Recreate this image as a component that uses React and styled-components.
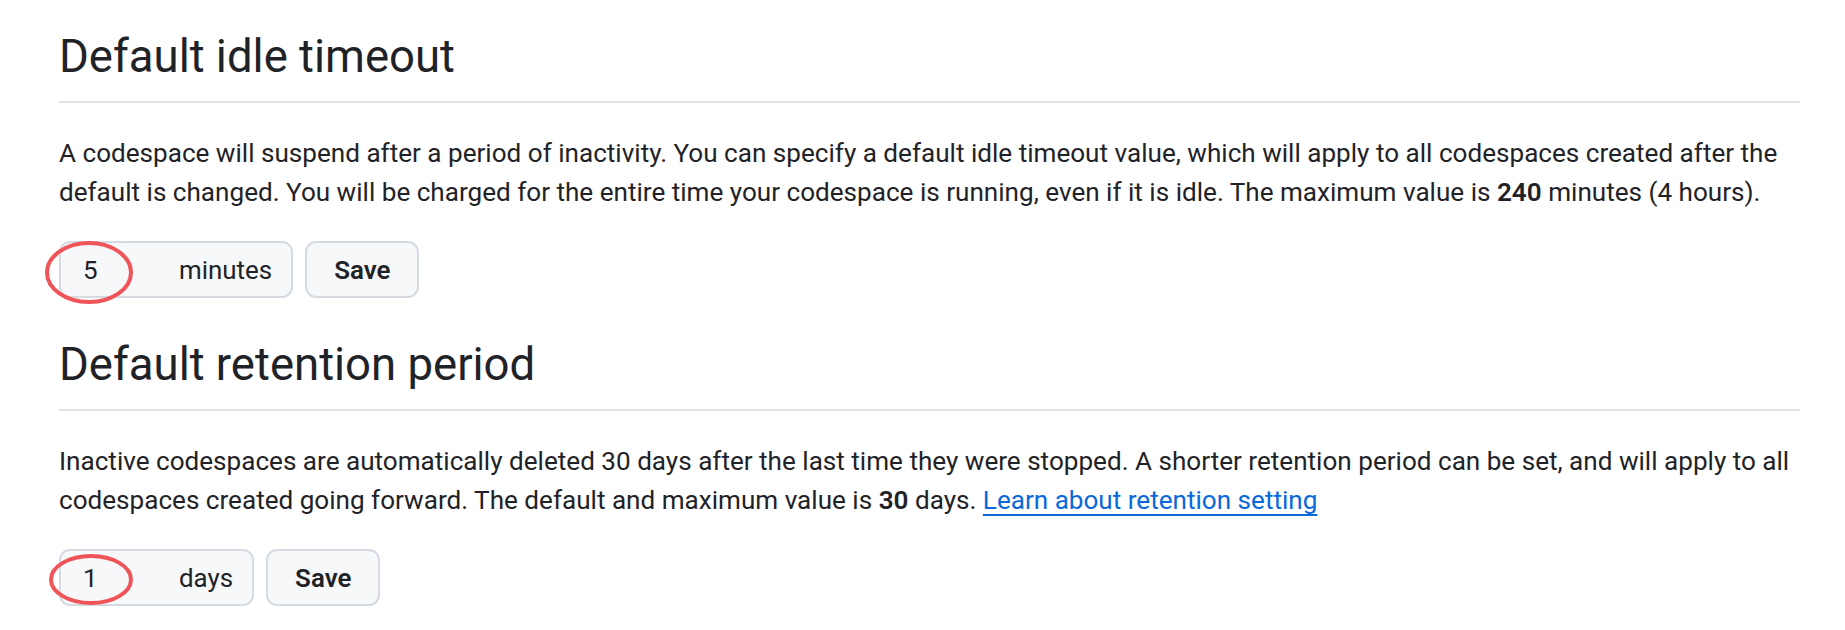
import React from "react";
import styled, { createGlobalStyle } from "styled-components";

const GlobalStyle = createGlobalStyle`
	body {
		margin: 0;
		background: #fff;
		color: #1f2328;
		font-family: Roboto, "Noto Sans", "Liberation Sans", sans-serif;
	}
`;

const Page = styled.main`
	padding: 29px 45px 0 59px;
`;

const Section = styled.section`
	& + & {
		margin-top: 39px;
	}
`;

const Heading = styled.h2`
	margin: 0;
	padding-bottom: 16px;
	border-bottom: 2px solid #dfe4ea;
	font-size: 45.5px;
	line-height: 56px;
	font-weight: 400;
`;

const Text = styled.p`
	margin: 31px 0 29px;
	font-size: 26.1px;
	line-height: 39px;

	strong {
		font-weight: 600;
	}
`;

const Link = styled.a`
	color: #0969da;
	text-decoration: underline;
	text-decoration-thickness: 2px;
	text-underline-offset: 5px;
`;

const Form = styled.form`
	position: relative;
	display: flex;
	gap: 12px;
	height: 57px;
`;

const InputGroup = styled.label`
	display: flex;
	align-items: center;
	box-sizing: border-box;
	height: 100%;
	padding-right: 19px;
	border: 2px solid #d5dbe1;
	border-radius: 11px;
	background: #f6f8fa;
	font-size: 25.9px;
`;

const NumberInput = styled.input`
	box-sizing: border-box;
	width: 118px;
	padding: 0 0 0 22px;
	border: 0;
	outline: none;
	background: transparent;
	color: #1f2328;
	font: inherit;
`;

const SaveButton = styled.button`
	box-sizing: border-box;
	height: 100%;
	padding: 0 27px;
	border: 2px solid #d5dbe1;
	border-radius: 11px;
	background: #f6f8fa;
	color: #1f2328;
	font-family: inherit;
	font-size: 25.9px;
	font-weight: 600;
	cursor: pointer;
`;

// red hand-drawn marker over the number field
const Marker = styled.svg`
	position: absolute;
	left: ${(p) => p.$cx - p.$rx - 2}px;
	top: ${(p) => p.$cy - p.$ry - 2}px;
	overflow: visible;
	pointer-events: none;
`;

const Circle = ({ cx, cy, rx, ry }) => (
	<Marker $cx={cx} $cy={cy} $rx={rx} $ry={ry} width={rx * 2 + 4} height={ry * 2 + 4}>
		<ellipse cx={rx + 2} cy={ry + 2} rx={rx} ry={ry} fill="none" stroke="#ef5459" strokeWidth="4" />
	</Marker>
);

const sections = [
	{
		title: "Default idle timeout",
		text: (
			<>
				A codespace will suspend after a period of inactivity. You can specify a default idle timeout value,
				which will apply to all codespaces created after the default is changed. You will be charged for the
				entire time your codespace is running, even if it is idle. The maximum value is <strong>240</strong>{" "}
				minutes (4 hours).
			</>
		),
		value: "5",
		unit: "minutes",
		marker: { cx: 30, cy: 31.5, rx: 42, ry: 29.5 },
	},
	{
		title: "Default retention period",
		text: (
			<>
				Inactive codespaces are automatically deleted 30 days after the last time they were stopped. A shorter
				retention period can be set, and will apply to all codespaces created going forward. The default and
				maximum value is <strong>30</strong> days. <Link href="#">Learn about retention setting</Link>
			</>
		),
		value: "1",
		unit: "days",
		marker: { cx: 32, cy: 30, rx: 40, ry: 23.5 },
	},
];

export default function App() {
	return (
		<Page>
			<GlobalStyle />
			{sections.map((item) => (
				<Section key={item.title}>
					<Heading>{item.title}</Heading>
					<Text>{item.text}</Text>
					<Form onSubmit={(e) => e.preventDefault()}>
						<InputGroup>
							<NumberInput type="text" defaultValue={item.value} aria-label={item.title} />
							<span>{item.unit}</span>
						</InputGroup>
						<SaveButton type="submit">Save</SaveButton>
						<Circle {...item.marker} />
					</Form>
				</Section>
			))}
		</Page>
	);
}
